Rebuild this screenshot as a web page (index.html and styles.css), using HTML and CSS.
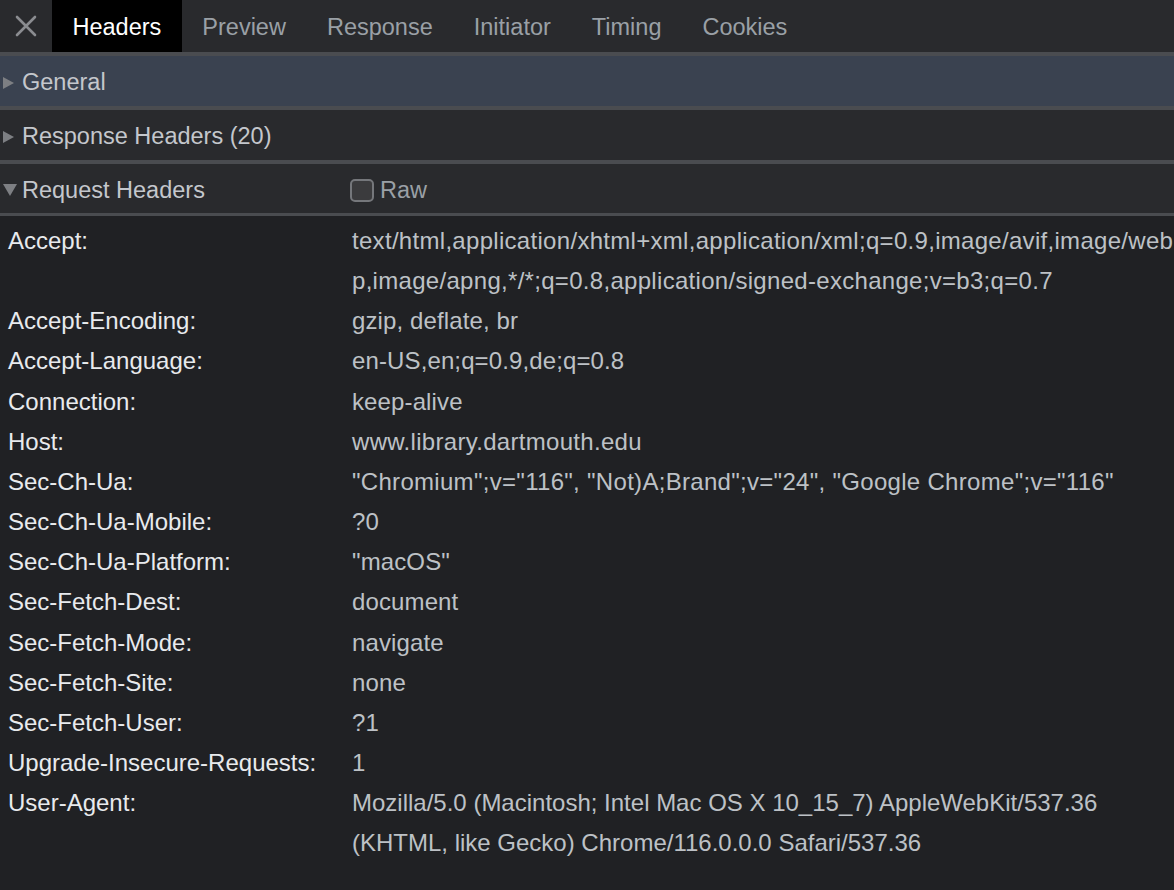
FILE: index.html
```html
<!DOCTYPE html>
<html>
<head>
<meta charset="utf-8">
<link rel="stylesheet" href="styles.css">
</head>
<body>
<div class="tabbar">
  <div class="close">
    <svg width="22" height="22" viewBox="0 0 22 22"><path d="M2 2 L20 20 M20 2 L2 20" stroke="#8a8c90" stroke-width="2.6" stroke-linecap="round"/></svg>
  </div>
  <div class="tab active">Headers</div>
  <div class="tab">Preview</div>
  <div class="tab">Response</div>
  <div class="tab">Initiator</div>
  <div class="tab">Timing</div>
  <div class="tab">Cookies</div>
</div>
<div class="section selected">
  <span class="tri right"></span><span class="title">General</span>
</div>
<div class="section">
  <span class="tri right"></span><span class="title">Response Headers (20)</span>
</div>
<div class="section last">
  <span class="tri down"></span><span class="title req">Request Headers</span>
  <span class="raw"><span class="box"></span>Raw</span>
</div>
<div class="rows">
  <div class="row"><div class="name">Accept:</div><div class="value wide">text/html,application/xhtml+xml,application/xml;q=0.9,image/avif,image/web<br>p,image/apng,*/*;q=0.8,application/signed-exchange;v=b3;q=0.7</div></div>
  <div class="row"><div class="name">Accept-Encoding:</div><div class="value">gzip, deflate, br</div></div>
  <div class="row"><div class="name">Accept-Language:</div><div class="value">en-US,en;q=0.9,de;q=0.8</div></div>
  <div class="row"><div class="name">Connection:</div><div class="value">keep-alive</div></div>
  <div class="row"><div class="name">Host:</div><div class="value wide">www.library.dartmouth.edu</div></div>
  <div class="row"><div class="name">Sec-Ch-Ua:</div><div class="value wide">"Chromium";v="116", "Not)A;Brand";v="24", "Google Chrome";v="116"</div></div>
  <div class="row"><div class="name">Sec-Ch-Ua-Mobile:</div><div class="value">?0</div></div>
  <div class="row"><div class="name">Sec-Ch-Ua-Platform:</div><div class="value">"macOS"</div></div>
  <div class="row"><div class="name">Sec-Fetch-Dest:</div><div class="value">document</div></div>
  <div class="row"><div class="name">Sec-Fetch-Mode:</div><div class="value">navigate</div></div>
  <div class="row"><div class="name">Sec-Fetch-Site:</div><div class="value">none</div></div>
  <div class="row"><div class="name">Sec-Fetch-User:</div><div class="value">?1</div></div>
  <div class="row"><div class="name">Upgrade-Insecure-Requests:</div><div class="value">1</div></div>
  <div class="row"><div class="name">User-Agent:</div><div class="value tight">Mozilla/5.0 (Macintosh; Intel Mac OS X 10_15_7) AppleWebKit/537.36<br>(KHTML, like Gecko) Chrome/116.0.0.0 Safari/537.36</div></div>
</div>
</body>
</html>
```
FILE: styles.css
```css
html, body {
  margin: 0;
  padding: 0;
  background: #202124;
  font-family: "Liberation Sans", Arial, Helvetica, sans-serif;
  font-size: 24px;
  overflow: hidden;
}
.tabbar {
  display: flex;
  height: 52px;
  background: #292a2d;
  border-bottom: 4px solid #4a4c50;
}
.close {
  width: 52px;
  display: flex;
  align-items: center;
  justify-content: center;
}
.tab {
  padding: 2px 20.5px 0;
  line-height: 50px;
  color: #9aa0a6;
  font-size: 23.5px;
}
.tab.active {
  background: #000;
  color: #fff;
}
.section {
  box-sizing: border-box;
  display: flex;
  align-items: center;
  height: 54px;
  padding-top: 3px;
  background: #292a2d;
  border-bottom: 4px solid #4a4c50;
  color: #c4c7cc;
  font-size: 23.5px;
}
.section.selected {
  background: #3a4250;
}
.section.last {
  height: 52px;
  border-bottom-width: 3px;
}
.tri {
  width: 0;
  height: 0;
}
.tri.right {
  margin-left: 3px;
  margin-right: 8px;
  border-top: 6px solid transparent;
  border-bottom: 6px solid transparent;
  border-left: 11px solid #7d7f83;
}
.tri.down {
  margin-left: 3px;
  margin-right: 5px;
  border-left: 7px solid transparent;
  border-right: 7px solid transparent;
  border-top: 12px solid #7d7f83;
}
.title.req {
  width: 327px;
}
.raw {
  display: flex;
  align-items: center;
  color: #9aa0a6;
}
.box {
  box-sizing: border-box;
  width: 24px;
  height: 23px;
  border: 2px solid #75777b;
  border-radius: 5px;
  background: #3b3b3d;
  margin-left: 1px;
  margin-right: 6px;
}
.rows {
  padding-top: 5px;
}
.row {
  display: flex;
  line-height: 40.15px;
}
.name {
  width: 344px;
  padding-left: 8px;
  flex-shrink: 0;
  color: #e8eaed;
}
.value {
  color: #bdc1c6;
  white-space: nowrap;
  letter-spacing: 0.12px;
}
.value.wide {
  letter-spacing: 0.3px;
}
.value.tight {
  letter-spacing: 0;
}
```
